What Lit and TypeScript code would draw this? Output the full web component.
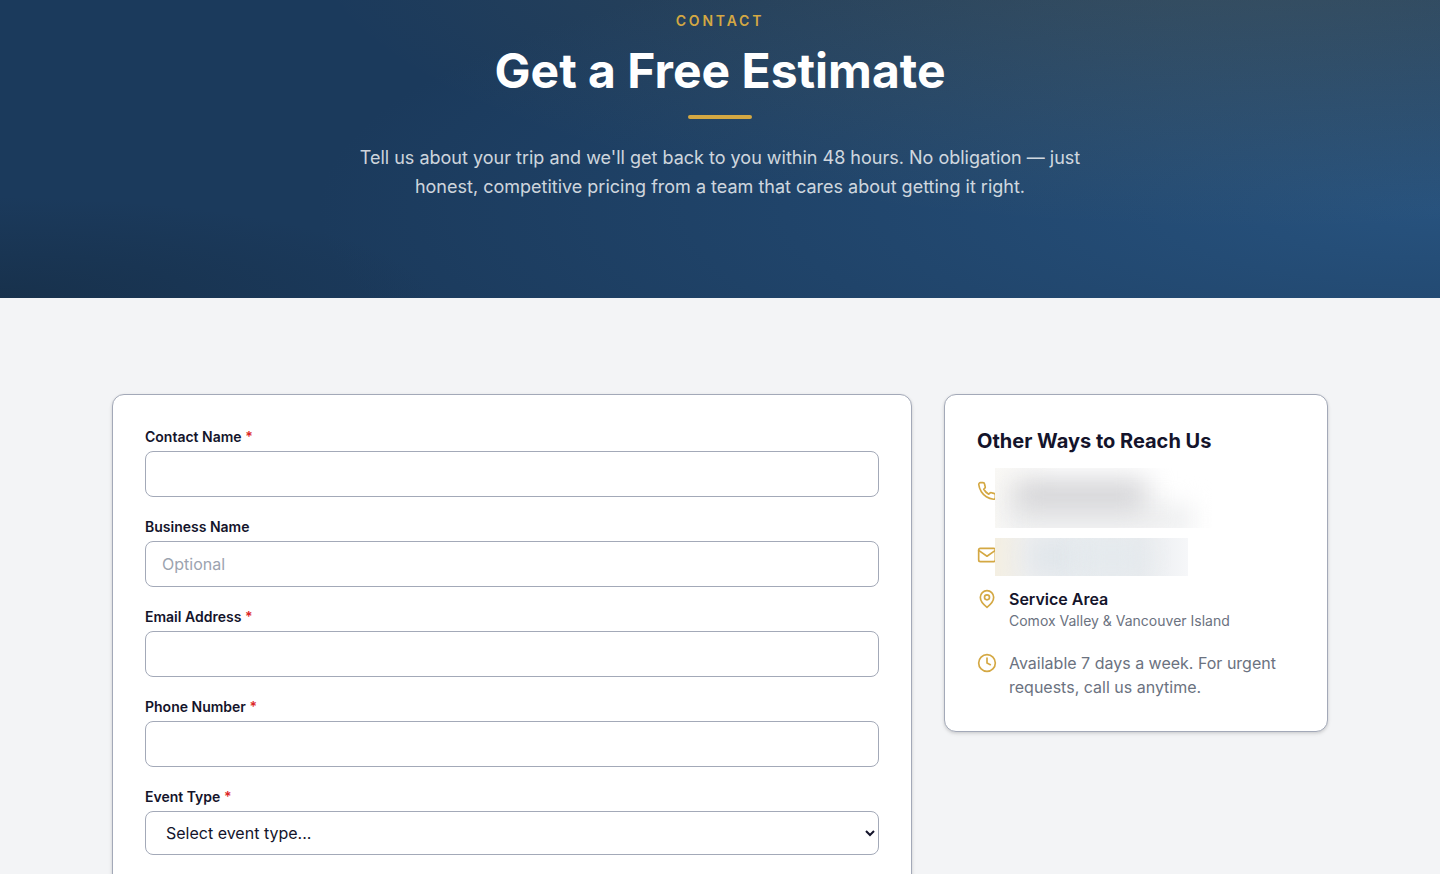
import { LitElement, html, css, svg, nothing } from "lit";
import { customElement } from "lit/decorators.js";

interface Field {
  id: string;
  label: string;
  type: string;
  required: boolean;
  placeholder?: string;
}

const FIELDS: Field[] = [
  { id: "contact", label: "Contact Name", type: "text", required: true },
  { id: "business", label: "Business Name", type: "text", required: false, placeholder: "Optional" },
  { id: "email", label: "Email Address", type: "email", required: true },
  { id: "phone", label: "Phone Number", type: "tel", required: true },
];

const ICONS = {
  phone: svg`<path d="M22 16.92v3a2 2 0 0 1-2.18 2 19.79 19.79 0 0 1-8.63-3.07 19.5 19.5 0 0 1-6-6 19.79 19.79 0 0 1-3.07-8.67A2 2 0 0 1 4.11 2h3a2 2 0 0 1 2 1.72 12.84 12.84 0 0 0 .7 2.81 2 2 0 0 1-.45 2.11L8.09 9.91a16 16 0 0 0 6 6l1.27-1.27a2 2 0 0 1 2.11-.45 12.84 12.84 0 0 0 2.81.7A2 2 0 0 1 22 16.92z"/>`,
  mail: svg`<rect x="2" y="4" width="20" height="16" rx="2"/><path d="m22 6.5-10 7-10-7"/>`,
  pin: svg`<path d="M20 10c0 6-8 12-8 12s-8-6-8-12a8 8 0 0 1 16 0z"/><circle cx="12" cy="10" r="3"/>`,
  clock: svg`<circle cx="12" cy="12" r="10"/><path d="M12 6v6l4 2"/>`,
};

@customElement("app-root")
export class AppRoot extends LitElement {
  static styles = css`
    :host {
      display: block;
      min-height: 100vh;
      overflow: hidden;
      background: #f3f4f6;
      color: #14142b;
      font: 400 16px/24px Inter, "Liberation Sans", sans-serif;
    }
    * { box-sizing: border-box; }
    h1, h2, p, ul { margin: 0; padding: 0; }

    .hero {
      padding: 11px 32px 97px;
      text-align: center;
      background:
        radial-gradient(ellipse 66% 97% at 87% -20%, rgba(212, 168, 67, 0.15), rgba(212, 168, 67, 0)),
        radial-gradient(ellipse 30% 34% at 0% 100%, rgba(20, 40, 60, 0.5), rgba(20, 40, 60, 0)),
        radial-gradient(ellipse 78% 100% at 100% 70%, rgba(42, 88, 134, 0.8), rgba(42, 88, 134, 0)),
        #1b3a5c;
    }
    .eyebrow {
      color: #d4a843;
      font-size: 14px;
      line-height: 20px;
      font-weight: 600;
      letter-spacing: 0.2em;
      text-transform: uppercase;
    }
    .title {
      margin-top: 12px;
      color: #fff;
      font-size: 48px;
      line-height: 56px;
      font-weight: 700;
    }
    .rule {
      width: 64px;
      height: 4px;
      margin: 16px auto 24px;
      border-radius: 2px;
      background: #d4a843;
    }
    .lead {
      max-width: 768px;
      margin: 0 auto;
      color: rgba(255, 255, 255, 0.8);
      font-size: 18px;
      line-height: 29px;
    }

    .content {
      display: grid;
      grid-template-columns: repeat(3, 1fr);
      align-items: start;
      gap: 32px;
      max-width: 1280px;
      margin: 0 auto;
      padding: 96px 32px;
    }
    .card {
      padding: 32px;
      background: #fff;
      border: 1px solid #a3a9b8;
      border-radius: 12px;
      box-shadow: 0 1px 3px rgba(0, 0, 0, 0.1), 0 2px 4px rgba(0, 0, 0, 0.08);
    }
    .form { grid-column: span 2; display: grid; gap: 20px; }
    .field { display: grid; gap: 4px; }
    .label { font-size: 14px; line-height: 20px; font-weight: 600; }
    .req { color: #dc2626; }
    .control {
      width: 100%;
      padding: 10px 16px;
      border: 1px solid #a3a9b8;
      border-radius: 8px;
      background: #fff;
      color: inherit;
      font: inherit;
    }
    .input { height: 46px; }
    .select { height: 44px; }
    .control::placeholder { color: #9ca3af; opacity: 1; }

    .heading { font-size: 20px; line-height: 28px; font-weight: 700; }
    .list { display: grid; gap: 20px; margin-top: 24px; list-style: none; }
    .item { position: relative; display: flex; gap: 12px; min-height: 24px; }
    .item-phone { min-height: 44px; }
    .icon {
      flex: none;
      width: 20px;
      height: 20px;
      margin-top: 2px;
      fill: none;
      stroke: #d4a843;
      stroke-width: 2;
      stroke-linecap: round;
      stroke-linejoin: round;
    }
    .strong { font-weight: 600; }
    .small { font-size: 14px; line-height: 20px; }
    .muted { color: #6b7280; }

    .veil {
      position: absolute;
      left: 18px;
      overflow: hidden;
    }
    .veil::before, .veil::after { content: ""; position: absolute; }
    .veil-phone { top: -11px; width: 217px; height: 60px; background: linear-gradient(90deg, #faf9f6, #fff 30%); }
    .veil-phone::before { left: 10px; top: 36px; width: 188px; height: 32px; background: #eeeff0; filter: blur(12px); }
    .veil-phone::after { left: 18px; top: 12px; width: 134px; height: 30px; background: #d0d0d3; filter: blur(14px); }
    .veil-mail { top: -5px; width: 193px; height: 38px; background: linear-gradient(90deg, #f4efe2, #eeeff0 18%, #e9edf0 40%, #e8ebee 75%, #f6f7f9); }
    .veil-mail::before { left: 36px; top: 6px; width: 40px; height: 26px; background: #dbe2e8; filter: blur(14px); }
    .veil-mail::after { left: 84px; top: 8px; width: 66px; height: 22px; background: #e3e9ed; filter: blur(12px); }

    @media (max-width: 900px) {
      .content { grid-template-columns: 1fr; }
      .form { grid-column: auto; }
    }
  `;

  private icon(name: keyof typeof ICONS) {
    return html`<svg class="icon" viewBox="0 0 24 24" aria-hidden="true">${ICONS[name]}</svg>`;
  }

  private label(id: string, text: string, required: boolean) {
    return html`<label class="label" for=${id}>${text}${required ? html` <span class="req">*</span>` : nothing}</label>`;
  }

  render() {
    return html`
      <header class="hero">
        <p class="eyebrow">Contact</p>
        <h1 class="title">Get a Free Estimate</h1>
        <div class="rule"></div>
        <p class="lead">Tell us about your trip and we'll get back to you within 48 hours. No obligation — just honest, competitive pricing from a team that cares about getting it right.</p>
      </header>
      <main class="content">
        <form class="card form">
          ${FIELDS.map((f) => html`
            <div class="field">
              ${this.label(f.id, f.label, f.required)}
              <input class="control input" id=${f.id} type=${f.type} placeholder=${f.placeholder ?? nothing} ?required=${f.required}>
            </div>`)}
          <div class="field">
            ${this.label("event", "Event Type", true)}
            <select class="control select" id="event" required>
              <option value="">Select event type...</option>
            </select>
          </div>
        </form>
        <aside class="card">
          <h2 class="heading">Other Ways to Reach Us</h2>
          <ul class="list">
            <li class="item item-phone">${this.icon("phone")}<span class="veil veil-phone"></span></li>
            <li class="item">${this.icon("mail")}<span class="veil veil-mail"></span></li>
            <li class="item">
              ${this.icon("pin")}
              <div>
                <p class="strong">Service Area</p>
                <p class="small muted">Comox Valley &amp; Vancouver Island</p>
              </div>
            </li>
            <li class="item">
              ${this.icon("clock")}
              <p class="muted">Available 7 days a week. For urgent requests, call us anytime.</p>
            </li>
          </ul>
        </aside>
      </main>
    `;
  }
}
